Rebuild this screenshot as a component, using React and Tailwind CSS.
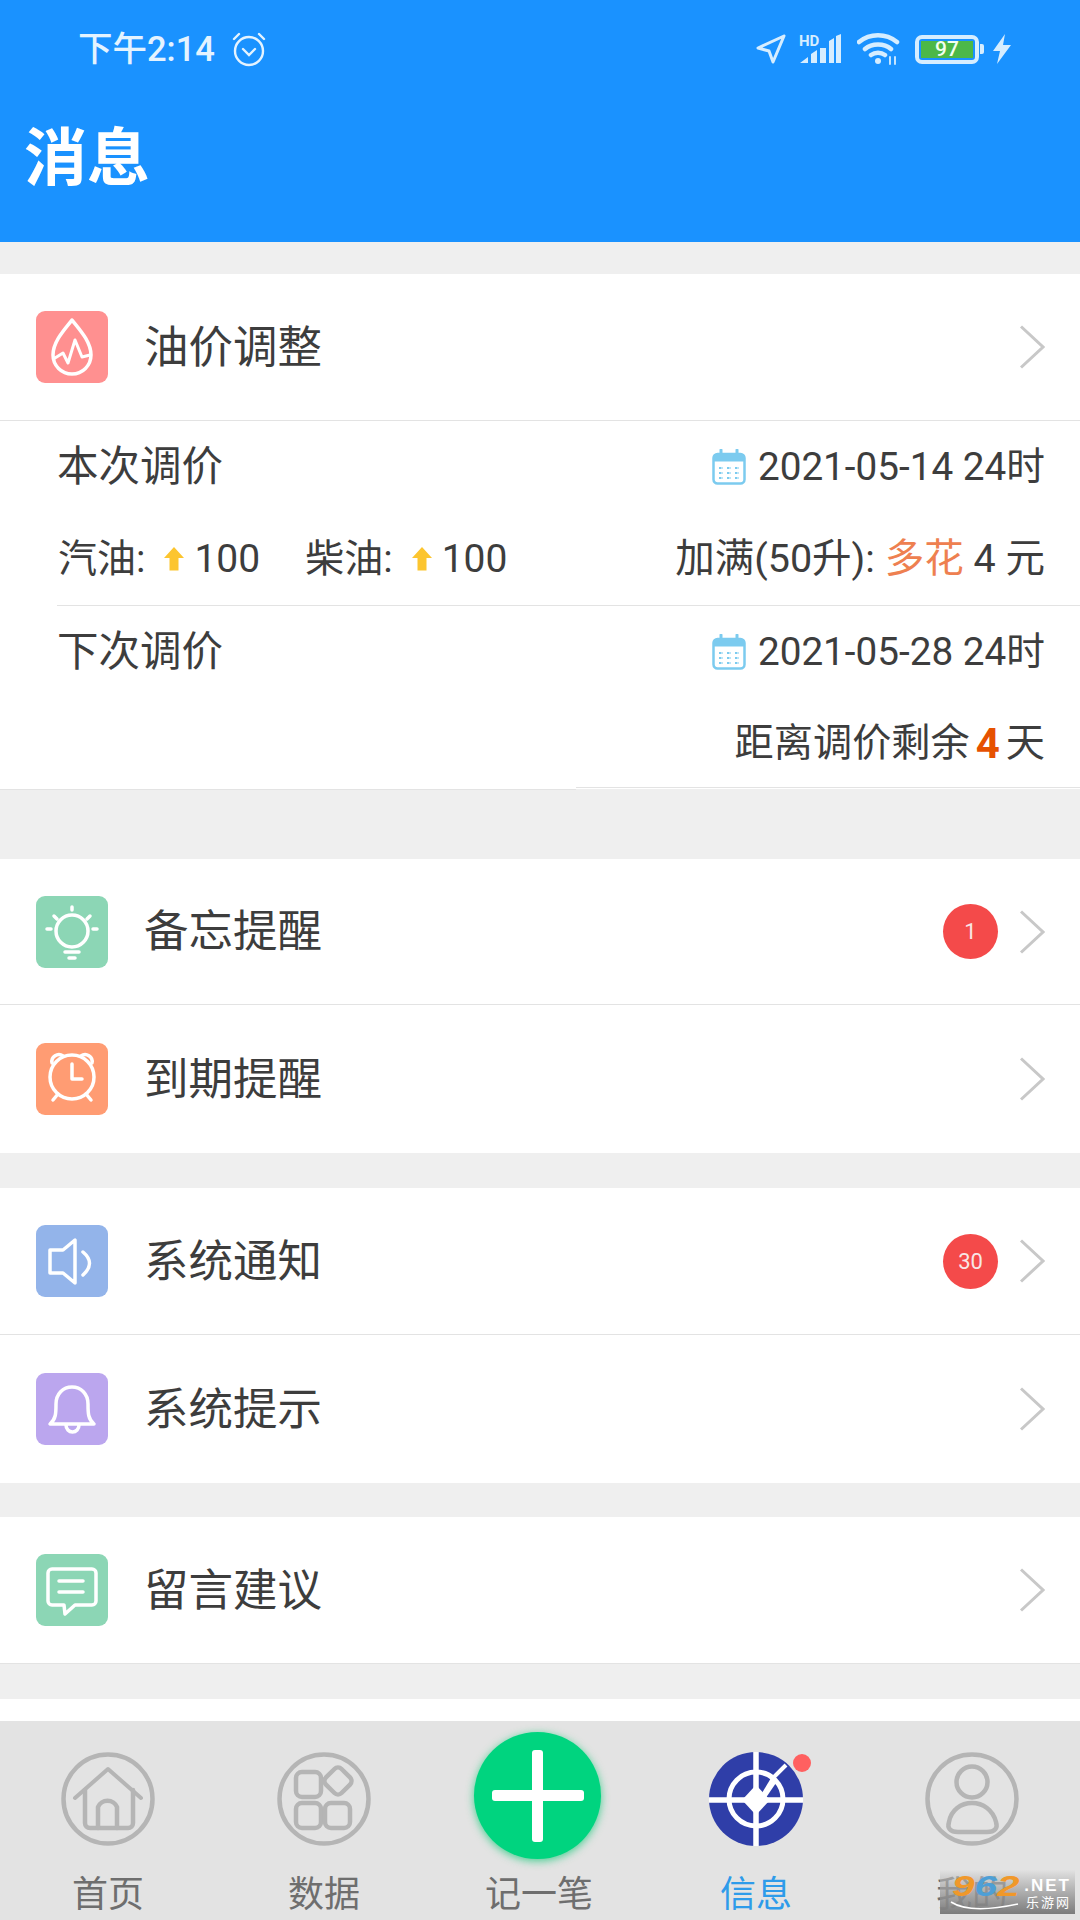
import React from 'react';

const Calendar = () => (
  <svg width="34" height="36" viewBox="0 0 34 36" fill="none" stroke="#7ccbef" className="shrink-0">
    <rect x="1.5" y="5" width="31" height="29.5" rx="4" strokeWidth="2.5" />
    <path d="M1.5 9a4 4 0 0 1 4-4h23a4 4 0 0 1 4 4v3h-31z" fill="#7ccbef" strokeWidth="1" />
    <path d="M9 1v6M25 1v6" strokeWidth="3" strokeLinecap="round" />
    <path d="M7 19h4M15 19h4M23 19h4M7 24h4M15 24h4M23 24h4M7 29h4M15 29h4M23 29h4" strokeWidth="2.2" strokeDasharray="2.5 1" />
  </svg>
);

const UpArrow = () => (
  <svg width="22" height="26" viewBox="0 0 22 26" className="shrink-0">
    <path d="M11 1L21 12H15.5V24.5H6.5V12H1z" fill="#fcc52f" />
  </svg>
);

const Chevron = () => (
  <svg width="26" height="44" viewBox="0 0 26 44" fill="none" stroke="#c8c8c8" strokeWidth="3" className="shrink-0">
    <path d="M2 1.5L24 22 2 42.5" />
  </svg>
);

const iconProps = { width: 72, height: 72, viewBox: '0 0 72 72', fill: 'none', stroke: 'white', strokeWidth: 3.5, strokeLinecap: 'round', strokeLinejoin: 'round' };

const DropIcon = () => (
  <svg {...iconProps}>
    <path d="M36 9C30 17 17 30 17 44a19 19 0 0 0 38 0C55 30 42 17 36 9z" />
    <path d="M19 47l8-5 5 10 7-23 7 17 8-2" strokeWidth="3" />
  </svg>
);
const BulbIcon = () => (
  <svg {...iconProps}>
    <circle cx="36" cy="35" r="16" />
    <path d="M36 11v3M11 33h4M57 33h4M18 20l3 3M54 20l-3 3M29 56h14M33 62h6" />
  </svg>
);
const AlarmIcon = () => (
  <svg {...iconProps}>
    <circle cx="36" cy="34" r="22" />
    <path d="M36 21v15h10M17 57l5-6M55 57l-5-6M16 20a7 7 0 0 1 11-7M56 20a7 7 0 0 0-11-7" />
  </svg>
);
const SpeakerIcon = () => (
  <svg {...iconProps}>
    <path d="M14 25h13l12-10v43L27 48H14z" />
    <path d="M47 27Q60 38 47 50" />
  </svg>
);
const BellIcon = () => (
  <svg {...iconProps}>
    <path d="M14 51h44c-6-5-6-11-6-20 0-10-7-17-16-17s-16 7-16 17c0 9 0 15-6 20z" />
    <path d="M30 52a6.5 7 0 0 0 13 0" />
  </svg>
);
const ChatIcon = () => (
  <svg {...iconProps}>
    <path d="M16 15h40a4 4 0 0 1 4 4v28a4 4 0 0 1-4 4H39l-10 9-1-9H16a4 4 0 0 1-4-4V19a4 4 0 0 1 4-4z" />
    <path d="M23 27h24M23 38h24" />
  </svg>
);

const navIconProps = { width: 94, height: 94, viewBox: '0 0 94 94', fill: 'none', stroke: '#b5b5b5', strokeWidth: 4.5, strokeLinecap: 'round', strokeLinejoin: 'round' };

const HomeNav = () => (
  <svg {...navIconProps}>
    <circle cx="47" cy="47" r="44.5" />
    <path d="M14 46L47 17l33 29" strokeWidth="4" />
    <path d="M24 38v33a5 5 0 0 0 5 5h38a5 5 0 0 0 5-5V38" />
    <path d="M37 76V55a10 9 0 0 1 19 0v21" />
  </svg>
);
const DataNav = () => (
  <svg {...navIconProps}>
    <circle cx="47" cy="47" r="44.5" />
    <rect x="19" y="20" width="25" height="25" rx="6" />
    <rect x="50" y="18" width="22" height="22" rx="5" transform="rotate(45 61 29)" />
    <rect x="19" y="51" width="25" height="25" rx="6" />
    <rect x="48" y="51" width="25" height="25" rx="6" />
  </svg>
);
const InfoNav = () => (
  <svg width="94" height="94" viewBox="0 0 94 94">
    <circle cx="47" cy="47" r="47" fill="#2f3ea8" />
    <circle cx="47" cy="47" r="27" fill="none" stroke="white" strokeWidth="5" />
    <path d="M47 0v94M0 48h94" stroke="white" strokeWidth="5.5" />
    <path d="M47 33l14 15-14 15-14-15z" fill="white" />
    <path d="M50 46L62 26l5 5-13 19z" fill="white" />
    <path d="M62 28l15-15" stroke="white" strokeWidth="4" />
  </svg>
);
const UserNav = () => (
  <svg {...navIconProps}>
    <circle cx="47" cy="47" r="44.5" />
    <circle cx="47" cy="30" r="15.5" />
    <path d="M33 80h29c8 0 11-4 9-10-3-12-13-19-24-19s-21 7-23 19c-2 6 1 10 9 10z" />
  </svg>
);

const MenuRow = ({ icon, color, title, badge, height = 'h-[147px]', border = true }) => (
  <div className={`flex items-center ${height} pl-[36px] pr-[35px] ${border ? 'border-b border-[#e3e3e3]' : ''}`}>
    <div className={`w-[72px] h-[72px] rounded-[9px] shrink-0 ${color}`}>{icon}</div>
    <span className="ml-[36px] pt-[2px] text-[44.5px] leading-none text-[#3d3d3d]">{title}</span>
    <div className="ml-auto flex items-center gap-[21px]">
      {badge && (
        <span className="w-[55px] h-[55px] rounded-full bg-[#f44a4a] text-[#f8e6e6] text-[22px] flex items-center justify-center">
          {badge}
        </span>
      )}
      <Chevron />
    </div>
  </div>
);

const NavItem = ({ icon, label, active }) => (
  <div className="flex flex-col items-center relative">
    <div className="mt-[31px] h-[94px]">{icon}</div>
    <span className={`mt-[29px] text-[36px] leading-[40px] ${active ? 'text-[#2e9bea]' : 'text-[#6e6e6e]'}`}>{label}</span>
  </div>
);

const App = () => {
  return (
    <div className="w-[1080px] h-[1920px] flex flex-col overflow-hidden relative bg-[#efefef] font-['Roboto','Noto_Sans_CJK_SC',sans-serif]">
      <header className="h-[242px] shrink-0 bg-[#1a92ff]">
        <div className="flex items-center h-[98px] pl-[78px] pr-[68px] text-[#e4f3ff]">
          <span className="text-[34.5px] leading-none font-medium">下午2:14</span>
          <svg width="34" height="36" viewBox="0 0 34 36" fill="none" stroke="#e4f3ff" strokeWidth="2.4" strokeLinecap="round" className="ml-[17px]">
            <circle cx="17" cy="20" r="14" />
            <path d="M11 18l6 6 6-6M2 8l5-5M32 8l-5-5" />
          </svg>
          <div className="ml-auto flex items-center">
            <svg width="30" height="30" viewBox="0 0 30 30" fill="none" stroke="#d6edff" strokeWidth="3" strokeLinejoin="round">
              <path d="M28 2L2 14l11 3 4 11z" />
            </svg>
            <svg width="42" height="32" viewBox="0 0 42 32" className="ml-[13px]" fill="#d6edff">
              <text x="0" y="13" fontSize="15" fontWeight="700" fontFamily="Roboto, sans-serif">HD</text>
              <path d="M1 30l8-6v6zM12 21l6-4v13h-6zM21 15h6v15h-6zM30 8l5-3v25h-5zM37 3l5-2v29h-5z" />
            </svg>
            <svg width="44" height="32" viewBox="0 0 44 32" fill="none" stroke="#d6edff" strokeWidth="4.5" strokeLinecap="round" className="ml-[16px]">
              <path d="M2 9c11-9 27-9 38 0M8 16c7-6 19-6 26 0M14 22c4-3 10-3 14 0" />
              <circle cx="21" cy="28" r="3" fill="#d6edff" stroke="none" />
              <path d="M33 24v7M38 24v7" strokeWidth="1.8" />
            </svg>
            <div className="ml-[14px] w-[64px] h-[29px] rounded-[7px] border-[4px] border-[#d6edff] p-[2px] flex">
              <div className="flex-1 bg-[#4cb848] flex items-center justify-center text-[21px] leading-none font-medium text-[#f2fff0]">97</div>
            </div>
            <div className="ml-[1px] w-[4px] h-[10px] rounded-r-[2px] bg-[#d6edff]" />
            <svg width="20" height="30" viewBox="0 0 20 30" fill="#d6edff" className="ml-[8px]">
              <path d="M13 0L1 17h7l-3 13L19 11h-8z" />
            </svg>
          </div>
        </div>
        <h1 className="pl-[24px] mt-[29px] text-[63px] leading-none font-bold text-white">消息</h1>
      </header>

      <main className="flex-1 min-h-0 overflow-hidden pt-[32px]">
        <section className="bg-white">
          <MenuRow icon={<DropIcon />} color="bg-[#ff9090]" title="油价调整" />
          <div className="text-[39.5px] text-[#3d3d3d]">
            <div className="flex items-center justify-between h-[92px] pl-[57px] pr-[35px]">
              <span className="text-[41.5px]">本次调价</span>
              <span className="flex items-center gap-[12px] text-[38.7px]"><Calendar />2021-05-14 24时</span>
            </div>
            <div className="flex items-center h-[92px] pl-[58px] pr-[35px]">
              <span className="text-[39px]">汽油:</span>
              <span className="ml-[18px]"><UpArrow /></span>
              <span className="ml-[9px] text-[39px]">100</span>
              <span className="ml-[45px] text-[39px]">柴油:</span>
              <span className="ml-[18px]"><UpArrow /></span>
              <span className="ml-[9px] text-[39px]">100</span>
              <span className="ml-auto">加满(50升): <span className="text-[#ee8050]">多花</span> 4 元</span>
            </div>
            <div className="ml-[57px] border-t border-[#e3e3e3]" />
            <div className="flex items-center justify-between h-[92px] pl-[57px] pr-[35px]">
              <span className="text-[41.5px]">下次调价</span>
              <span className="flex items-center gap-[12px] text-[38.7px]"><Calendar />2021-05-28 24时</span>
            </div>
            <div className="flex items-center justify-end h-[91px] pr-[35px] text-[39.2px]">
              距离调价剩余 <span className="font-bold text-[#e65100] text-[42px] mx-[6px]">4</span>天
            </div>
          </div>
          <div className="flex items-end h-[1px] bg-[#efefef]">
            <div className="w-[576px] border-b border-[#e3e3e3]" />
            <div className="flex-1 mb-[2px] border-b border-[#e3e3e3]" />
          </div>
        </section>

        <section className="mt-[69px] bg-white">
          <MenuRow icon={<BulbIcon />} color="bg-[#8cd6b5]" title="备忘提醒" badge="1" height="h-[146px]" />
          <MenuRow icon={<AlarmIcon />} color="bg-[#ff9c73]" title="到期提醒" height="h-[148px]" border={false} />
        </section>

        <section className="mt-[35px] bg-white">
          <MenuRow icon={<SpeakerIcon />} color="bg-[#93b4ea]" title="系统通知" badge="30" />
          <MenuRow icon={<BellIcon />} color="bg-[#bba6ee]" title="系统提示" height="h-[148px]" border={false} />
        </section>

        <section className="mt-[34px] bg-white">
          <MenuRow icon={<ChatIcon />} color="bg-[#8cd6b5]" title="留言建议" />
        </section>

        <section className="mt-[35px] h-[60px] bg-white" />
      </main>

      <nav className="h-[199px] shrink-0 bg-[#e3e3e3] grid grid-cols-5">
        <NavItem icon={<HomeNav />} label="首页" />
        <NavItem icon={<DataNav />} label="数据" />
        <div className="flex flex-col items-center">
          <div className="mt-[11px] mr-[5px] w-[127px] h-[127px] rounded-full bg-[#00d47f] shadow-[0_2px_8px_rgba(0,200,110,0.7)] flex items-center justify-center relative">
            <span className="absolute w-[92px] h-[11px] rounded-[3px] bg-white" />
            <span className="absolute w-[11px] h-[92px] rounded-[3px] bg-white" />
          </div>
          <span className="mt-[16px] mr-[2px] text-[36px] leading-[40px] text-[#6e6e6e]">记一笔</span>
        </div>
        <div className="relative flex flex-col items-center">
          <NavItem icon={<InfoNav />} label="信息" active />
          <span className="absolute left-[145px] top-[33px] w-[18px] h-[18px] rounded-full bg-[#ff6060]" />
        </div>
        <NavItem icon={<UserNav />} label="我的" />
      </nav>

      <div className="absolute right-[5px] bottom-[6px] w-[135px] h-[44px] bg-gradient-to-b from-[#e0e0e0]/50 to-[#7c7c7c] overflow-hidden">
        <span className="absolute left-[12px] top-[1px] text-[30px] leading-none font-bold italic scale-x-[1.35] origin-left font-['Liberation_Sans',sans-serif]">
          <span className="text-[#f0982a]">9</span>
          <span className="text-[#4d9fd6]">6</span>
          <span className="text-[#f0982a]">2</span>
        </span>
        <span className="absolute right-[4px] top-[7px] text-[17px] leading-none font-bold tracking-[2px] text-white font-['Liberation_Sans',sans-serif]">.NET</span>
        <span className="absolute right-[4px] top-[26px] text-[13px] leading-none tracking-[2px] text-white">乐游网</span>
        <svg width="70" height="12" viewBox="0 0 70 12" fill="none" stroke="white" strokeWidth="1.5" className="absolute left-[10px] bottom-[2px]">
          <path d="M1 2C15 11 40 10 68 4" />
        </svg>
      </div>
    </div>
  );
};

export default App;
